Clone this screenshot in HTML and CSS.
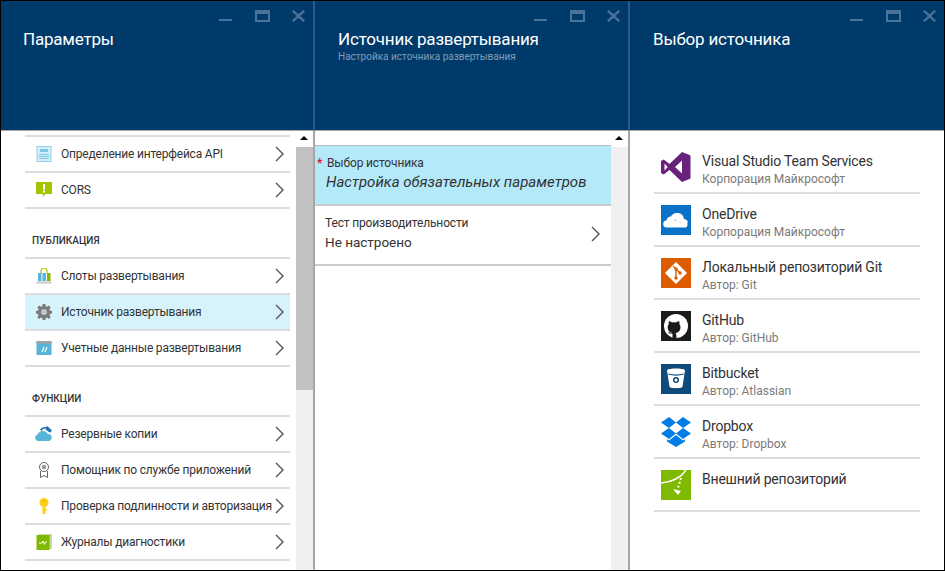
FILE: index.html
```html
<!DOCTYPE html>
<html lang="ru">
  <head>
    <meta charset="UTF-8" />
    <title>Источник развертывания</title>
    <link rel="stylesheet" href="styles.css">
  </head>
  <body>
    <main class="portal">
      <section class="blade blade-settings">
        <header class="blade-header">
          <div class="blade-controls">
            <svg viewBox="0 0 14 12" width="14" height="12"><rect x="0" y="9" width="13" height="2" /></svg>
            <svg viewBox="0 0 15 12" width="15" height="12"><path d="M0 0h15v12H0zM2 4v6h11V4z" fill-rule="evenodd" /></svg>
            <svg viewBox="0 0 13 12" width="13" height="12"><path d="M1.500 0l5 4.300L11.500 0 13 1.500 8.200 6 13 10.500 11.500 12l-5-4.300L1.500 12 0 10.500 4.800 6 0 1.500z" /></svg>
          </div>
          <h1>Параметры</h1>
        </header>
        <div class="blade-body">
          <div class="settings-list">
            <ul class="menu">
              <li class="menu-item">
                <svg class="menu-icon" viewBox="0 0 16 16"><rect x="1" y="0.500" width="14" height="15" fill="#d5eef8" stroke="#8fd0ea" /><rect x="4" y="3" width="8" height="3" fill="#7fc6e4" /><path d="M3 8.500h10M3 10.500h10M3 12.500h10" stroke="#7fc6e4" /></svg>
                <span>Определение интерфейса API</span>
                <svg class="chevron" viewBox="0 0 9 16"><path d="M1 1l7 7-7 7" /></svg>
              </li>
              <li class="menu-item">
                <svg class="menu-icon" viewBox="0 0 16 16"><path d="M0 0h16v12H9l-1.500 3-1-3H0z" fill="#a4c400" /><rect x="7" y="2" width="2" height="5.500" fill="#fff" /><rect x="7" y="8.500" width="2" height="2" fill="#fff" /></svg>
                <span>CORS</span>
                <svg class="chevron" viewBox="0 0 9 16"><path d="M1 1l7 7-7 7" /></svg>
              </li>
            </ul>
            <h2 class="menu-title">Публикация</h2>
            <ul class="menu">
              <li class="menu-item">
                <svg class="menu-icon" viewBox="0 0 16 16"><path d="M5 5V3a3 3 0 0 1 6 0v2" fill="none" stroke="#a4c400" stroke-width="1.200" /><rect x="2" y="5" width="3.500" height="8" fill="#59b4d9" /><rect x="6.500" y="5" width="3.500" height="8" fill="#59b4d9" /><rect x="11" y="5" width="3.500" height="8" fill="#7fba00" /><rect x="0.500" y="13.500" width="15" height="2" fill="#c8c8c8" /></svg>
                <span>Слоты развертывания</span>
                <svg class="chevron" viewBox="0 0 9 16"><path d="M1 1l7 7-7 7" /></svg>
              </li>
              <li class="menu-item is-selected">
                <svg class="menu-icon" viewBox="0 0 16 16"><path d="M6.700 0h2.600l.4 2.200 1.300.6 1.900-1.300 1.800 1.800-1.300 1.900.6 1.300 2 .4v2.600l-2 .4-.6 1.300 1.300 1.900-1.800 1.800-1.900-1.300-1.300.6-.4 2.100H6.700l-.4-2.100-1.300-.6-1.900 1.300-1.800-1.800 1.300-1.900-.6-1.300-2-.4V6.900l2-.4.6-1.300-1.300-1.900 1.800-1.800L5 2.800l1.300-.6z" fill="#7a7a7a" /><circle cx="8" cy="8" r="3" fill="#bcc8cc" /></svg>
                <span>Источник развертывания</span>
                <svg class="chevron" viewBox="0 0 9 16"><path d="M1 1l7 7-7 7" /></svg>
              </li>
              <li class="menu-item">
                <svg class="menu-icon" viewBox="0 0 16 16"><rect x="0.500" y="1" width="15" height="14" fill="#59b4d9" /><rect x="0.500" y="1" width="15" height="2.500" fill="#a0a1a2" /><path d="M6 12l2-5M9 12l2-5" stroke="#fff" stroke-width="1.200" /></svg>
                <span>Учетные данные развертывания</span>
                <svg class="chevron" viewBox="0 0 9 16"><path d="M1 1l7 7-7 7" /></svg>
              </li>
            </ul>
            <h2 class="menu-title">Функции</h2>
            <ul class="menu">
              <li class="menu-item">
                <svg class="menu-icon menu-icon-wide" viewBox="0 0 17 16"><path d="M3.300 15a3.300 3.300 0 0 1-.6-6.500A5.500 5.500 0 0 1 12.800 8a3.500 3.500 0 0 1 .7 7z" fill="#59b4d9" /><path d="M5 3.500A6 6 0 0 1 11 1l1.500-.8L17 4.500l-2 2.300-4.500-3.300 1-.8A4.500 4.500 0 0 0 6.500 5z" fill="#1f6fb5" /></svg>
                <span>Резервные копии</span>
                <svg class="chevron" viewBox="0 0 9 16"><path d="M1 1l7 7-7 7" /></svg>
              </li>
              <li class="menu-item">
                <svg class="menu-icon" viewBox="0 0 16 16"><circle cx="8" cy="5" r="4.500" fill="none" stroke="#666" /><circle cx="8" cy="5" r="2.300" fill="#999" /><path d="M4.500 9v6.500L8 13.500l3.500 2V9" fill="none" stroke="#666" /></svg>
                <span>Помощник по службе приложений</span>
                <svg class="chevron" viewBox="0 0 9 16"><path d="M1 1l7 7-7 7" /></svg>
              </li>
              <li class="menu-item">
                <svg class="menu-icon" viewBox="0 0 16 16"><circle cx="8" cy="4.500" r="4.500" fill="#fcd116" /><rect x="6.500" y="8" width="3" height="8" fill="#fcd116" /><rect x="9" y="11" width="2" height="1.500" fill="#fcd116" /><rect x="6.500" y="2.500" width="3" height="1.200" fill="#e0a800" /></svg>
                <span>Проверка подлинности и авторизация</span>
                <svg class="chevron" viewBox="0 0 9 16"><path d="M1 1l7 7-7 7" /></svg>
              </li>
              <li class="menu-item">
                <svg class="menu-icon" viewBox="0 0 16 16"><rect x="3" y="0" width="13" height="15" fill="#c3d9a0" /><rect x="0.500" y="1" width="13" height="15" fill="#7fba00" /><path d="M3 9h3l1-2 1.500 3.500L9.500 8H11" fill="none" stroke="#fff" /></svg>
                <span>Журналы диагностики</span>
                <svg class="chevron" viewBox="0 0 9 16"><path d="M1 1l7 7-7 7" /></svg>
              </li>
            </ul>
          </div>
          <div class="scrollbar">
            <div class="scroll-up"></div>
            <div class="scroll-thumb"></div>
          </div>
        </div>
      </section>

      <section class="blade blade-source">
        <header class="blade-header">
          <div class="blade-controls">
            <svg viewBox="0 0 14 12" width="14" height="12"><rect x="0" y="9" width="13" height="2" /></svg>
            <svg viewBox="0 0 15 12" width="15" height="12"><path d="M0 0h15v12H0zM2 4v6h11V4z" fill-rule="evenodd" /></svg>
            <svg viewBox="0 0 13 12" width="13" height="12"><path d="M1.500 0l5 4.300L11.500 0 13 1.500 8.200 6 13 10.500 11.500 12l-5-4.300L1.500 12 0 10.500 4.800 6 0 1.500z" /></svg>
          </div>
          <h1>Источник развертывания</h1>
          <p class="blade-subtitle">Настройка источника развертывания</p>
        </header>
        <div class="blade-body">
          <div class="source-list">
            <div class="source-row is-required">
              <p class="source-label"><span class="required-mark">*</span>Выбор источника</p>
              <p class="source-value source-value-hint">Настройка обязательных параметров</p>
            </div>
            <div class="source-row">
              <p class="source-label">Тест производительности</p>
              <p class="source-value">Не настроено</p>
              <svg class="chevron" viewBox="0 0 9 16"><path d="M1 1l7 7-7 7" /></svg>
            </div>
          </div>
          <div class="scrollbar">
            <div class="scroll-up"></div>
          </div>
        </div>
      </section>

      <section class="blade blade-provider">
        <header class="blade-header">
          <div class="blade-controls">
            <svg viewBox="0 0 14 12" width="14" height="12"><rect x="0" y="9" width="13" height="2" /></svg>
            <svg viewBox="0 0 15 12" width="15" height="12"><path d="M0 0h15v12H0zM2 4v6h11V4z" fill-rule="evenodd" /></svg>
            <svg viewBox="0 0 13 12" width="13" height="12"><path d="M1.500 0l5 4.300L11.500 0 13 1.500 8.200 6 13 10.500 11.500 12l-5-4.300L1.500 12 0 10.500 4.800 6 0 1.500z" /></svg>
          </div>
          <h1>Выбор источника</h1>
        </header>
        <ul class="providers">
          <li class="provider">
            <svg class="provider-icon" viewBox="0 0 30 30"><path d="M21 0l8.500 3.500v23L21 30 8.500 18 2.800 22.500 0 21V9l2.800-1.500L8.500 12zM21 8.500L14 15l7 6.500zM3.500 11.500v7l3.300-3.500z" fill="#68217a" fill-rule="evenodd" /></svg>
            <div class="provider-text"><p class="provider-name">Visual Studio Team Services</p><p class="provider-by">Корпорация Майкрософт</p></div>
          </li>
          <li class="provider">
            <svg class="provider-icon" viewBox="0 0 30 30"><rect width="30" height="30" fill="#0a72c6" /><path d="M9.500 12.500a7 7 0 0 1 13.500 1.500 4.500 4.500 0 0 1 4 3.500H15a6 6 0 0 0-5.500-5z" fill="#fff" /><path d="M6 22.500a3.500 3.500 0 0 1-.5-7 5 5 0 0 1 9.500-.8 4 4 0 0 1 3.500 2.800h1a3.800 3.800 0 0 1 7 2.500 3 3 0 0 1-1.500 2.500z" fill="#fff" /><path d="M15 14.700a4.500 4.500 0 0 0-1 1" stroke="#0a72c6" fill="none" /></svg>
            <div class="provider-text"><p class="provider-name">OneDrive</p><p class="provider-by">Корпорация Майкрософт</p></div>
          </li>
          <li class="provider">
            <svg class="provider-icon" viewBox="0 0 30 30"><rect width="30" height="30" fill="#de5c00" /><path d="M15 4l11 11-11 11L4 15z" fill="#fff" /><path d="M12 8l7 7M15 11v9" stroke="#de5c00" stroke-width="1.400" fill="none" /><circle cx="15" cy="11" r="1.700" fill="#de5c00" /><circle cx="19" cy="15" r="1.700" fill="#de5c00" /><circle cx="15" cy="20" r="1.700" fill="#de5c00" /></svg>
            <div class="provider-text"><p class="provider-name">Локальный репозиторий Git</p><p class="provider-by">Автор: Git</p></div>
          </li>
          <li class="provider">
            <svg class="provider-icon" viewBox="0 0 30 30"><rect width="30" height="30" fill="#1b1b1b" /><circle cx="15" cy="15" r="12" fill="#fff" /><path d="M11.500 27v-4c-3 .5-3.800-1-4.500-2.500 1.500.5 2 1.500 3 2 .6.200 1.200 0 1.600-.4-3-.6-5-2.600-5-5.600 0-1.200.4-2.300 1.100-3.200-.2-1-.2-2 .3-3 1.200 0 2.200.6 3 1.200a10 10 0 0 1 4-.1c1-.6 2-1.100 3.100-1.100.5 1 .5 2 .3 3 .8.900 1.100 2 1.100 3.200 0 3-2 5-5 5.600.6.500.9 1.300.9 2.300V27a12 12 0 0 1-7 0z" fill="#1b1b1b" /></svg>
            <div class="provider-text"><p class="provider-name">GitHub</p><p class="provider-by">Автор: GitHub</p></div>
          </li>
          <li class="provider">
            <svg class="provider-icon" viewBox="0 0 30 30"><rect width="30" height="30" fill="#0f4a7a" /><path d="M6 6c3-2 15-2 18 0l-2.500 17c-2 1.600-11 1.600-13 0z" fill="#fff" /><path d="M7.500 10c4 1.200 11 1.200 15 0" stroke="#0f4a7a" stroke-width="1.300" fill="none" /><circle cx="15" cy="16" r="2.300" fill="none" stroke="#0f4a7a" stroke-width="1.500" /></svg>
            <div class="provider-text"><p class="provider-name">Bitbucket</p><p class="provider-by">Автор: Atlassian</p></div>
          </li>
          <li class="provider">
            <svg class="provider-icon provider-icon-wide" viewBox="0 0 32 30"><path d="M9 0l7 5.500L9 11 1 5.500zM23 0l8 5.500L23 11l-7-5.500zM9 11l7 5.500L9 22l-8-5.500zM23 11l8 5.500L23 22l-7-5.500z" fill="#007ee5" /><path d="M9 23.500l7-5.500 7 5.500 2-1.300v2.300L16 30l-9-5.500v-2.300z" fill="#007ee5" /></svg>
            <div class="provider-text"><p class="provider-name">Dropbox</p><p class="provider-by">Автор: Dropbox</p></div>
          </li>
          <li class="provider">
            <svg class="provider-icon" viewBox="0 0 30 30"><rect width="30" height="30" fill="#7fba00" /><path d="M0 13C10 12 19 9 25 0" fill="none" stroke="#fff" stroke-width="1.500" /><path d="M20 8l-3 10" fill="none" stroke="#fff" stroke-width="2" stroke-dasharray="2 2" /><path d="M12 19l5 6 3-4z" fill="#fff" /></svg>
            <div class="provider-text"><p class="provider-name">Внешний репозиторий</p></div>
          </li>
        </ul>
      </section>
    </main>
  </body>
</html>
```

FILE: styles.css
```css
* {
  margin: 0;
  padding: 0;
  box-sizing: border-box;
}

body {
  font-family: Roboto, "Noto Sans", sans-serif;
  color: #333;
  background-color: #fff;
}

ul {
  list-style: none;
}

.portal {
  width: 945px;
  height: 571px;
  border: 1px solid #000;
  display: flex;
  overflow: hidden;
}

.blade {
  display: flex;
  flex-direction: column;
  border-right: 2px solid #a6a6a6;
}

.blade-settings {
  width: 314px;
}

.blade-source {
  width: 315px;
}

.blade-provider {
  flex: 1;
  border-right: 0;
}

.blade-header {
  height: 130px;
  padding: 26px 0 0 22px;
  flex-shrink: 0;
  background-color: #003a6b;
  border-bottom: 1px solid #a6a6a6;
  color: #fff;
  position: relative;
  margin-right: -2px;
  border-right: 2px solid #2b5c88;
}

.blade-source .blade-header {
  padding-left: 23px;
}

.blade-provider .blade-header {
  margin-right: 0;
  border-right: 0;
  padding-left: 23px;
}

.blade-header h1 {
  font-size: 17px;
  font-weight: 400;
  line-height: 24px;
  letter-spacing: -0.200px;
}

.blade-subtitle {
  font-size: 10px;
  line-height: 13px;
  margin-top: -1px;
  color: #7f9db9;
}

.blade-controls {
  position: absolute;
  top: 9px;
  right: 8px;
  display: flex;
  gap: 22px;
  fill: #4a7399;
}

.blade-body {
  flex: 1;
  display: flex;
  min-height: 0;
}

.settings-list {
  flex: 1;
  min-width: 0;
  padding: 4px 6px 0 24px;
}

.menu {
  border-top: 2px solid #ddd;
}

.menu-item {
  height: 36px;
  display: flex;
  align-items: center;
  padding: 0 6px 1px 11px;
  border-bottom: 2px solid #ddd;
  font-size: 12px;
  letter-spacing: -0.200px;
  white-space: nowrap;
}

.menu-item.is-selected {
  background-color: #d6f3fc;
}

.menu-icon {
  width: 16px;
  height: 16px;
  margin-right: 9px;
  flex-shrink: 0;
}

.menu-icon-wide {
  width: 17px;
  margin-left: -1px;
}

.chevron {
  width: 9px;
  height: 16px;
  margin-left: auto;
  flex-shrink: 0;
  fill: none;
  stroke: #555;
  stroke-width: 1.400;
}

.menu-title {
  height: 48px;
  padding: 25px 0 0 7px;
  font-size: 10px;
  line-height: 14px;
  font-weight: 500;
  text-transform: uppercase;
}

.scrollbar {
  width: 17px;
  flex-shrink: 0;
  background-color: #f0f0f0;
}

.scroll-up {
  height: 16px;
  background-color: #fff;
  position: relative;
}

.scroll-up::after {
  content: "";
  position: absolute;
  left: 4px;
  top: 5px;
  border-left: 4px solid transparent;
  border-right: 4px solid transparent;
  border-bottom: 4px solid #000;
}

.scroll-thumb {
  height: 243px;
  background-color: #c2c2c2;
}

.source-list {
  flex: 1;
  min-width: 0;
  padding-top: 14px;
}

.source-row {
  height: 60px;
  padding: 9px 15px 0 10px;
  position: relative;
  border-bottom: 2px solid #ccc;
}

.source-row.is-required {
  height: 61px;
  background-color: #b3e9f9;
  border-top: 1px solid #bbb;
  padding: 9px 15px 0 2px;
}

.source-label {
  font-size: 12px;
  line-height: 16px;
  letter-spacing: -0.150px;
  white-space: nowrap;
}

.required-mark {
  display: inline-block;
  width: 10px;
  color: #e81123;
  font-weight: 700;
}

.source-value {
  font-size: 13.500px;
  line-height: 20px;
  margin-top: 1px;
  white-space: nowrap;
}

.source-value-hint {
  font-size: 15px;
  font-style: italic;
  padding-left: 9px;
}

.source-row .chevron {
  position: absolute;
  right: 11px;
  top: 20px;
}

.providers {
  padding: 9px 24px 0 24px;
}

.provider {
  height: 53px;
  padding-top: 11px;
  display: flex;
  border-bottom: 2px solid #ddd;
}

.provider:first-child {
  height: 54px;
  padding-top: 12px;
}

.provider-icon {
  width: 30px;
  height: 30px;
  margin-left: 7px;
  margin-right: 11px;
  flex-shrink: 0;
}

.provider-icon-wide {
  width: 32px;
  margin-left: 6px;
  margin-right: 10px;
}

.provider-name {
  font-size: 14px;
  line-height: 18px;
  letter-spacing: -0.200px;
  white-space: nowrap;
}

.provider-by {
  font-size: 12px;
  line-height: 16px;
  margin-top: 1px;
  color: #7a7a7a;
  white-space: nowrap;
}
```
